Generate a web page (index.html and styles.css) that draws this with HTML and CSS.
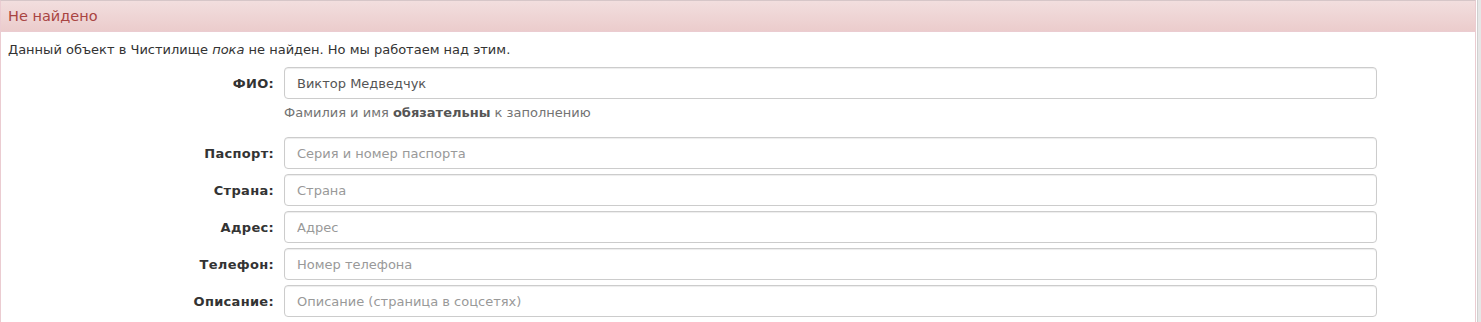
FILE: index.html
```html
<!DOCTYPE html>
<html lang="ru">
<head>
  <meta charset="UTF-8" />
  <title>Не найдено</title>
  <link rel="stylesheet" href="styles.css">
</head>
<body>
  <div class="panel">
    <div class="panel-heading">Не найдено</div>
    <div class="panel-body">
      <p class="intro">Данный объект в Чистилище <em>пока</em> не найден. Но мы работаем над этим.</p>

      <form class="form">
        <div class="row">
          <label for="fio">ФИО:</label>
          <input type="text" id="fio" value="Виктор Медведчук" />
        </div>
        <div class="row help-row">
          <span></span>
          <p class="help">Фамилия и имя <b>обязательны</b> к заполнению</p>
        </div>
        <div class="row">
          <label for="passport">Паспорт:</label>
          <input type="text" id="passport" placeholder="Серия и номер паспорта" />
        </div>
        <div class="row">
          <label for="country">Страна:</label>
          <input type="text" id="country" placeholder="Страна" />
        </div>
        <div class="row">
          <label for="address">Адрес:</label>
          <input type="text" id="address" placeholder="Адрес" />
        </div>
        <div class="row">
          <label for="phone">Телефон:</label>
          <input type="text" id="phone" placeholder="Номер телефона" />
        </div>
        <div class="row">
          <label for="desc">Описание:</label>
          <input type="text" id="desc" placeholder="Описание (страница в соцсетях)" />
        </div>
      </form>
    </div>
  </div>
  <div class="edge"></div>
</body>
</html>
```

FILE: styles.css
```css
body {
  margin: 0;
  font-family: "DejaVu Sans", Verdana, sans-serif;
  font-size: 13px;
  color: #333;
  background: #fff;
  display: flex;
  height: 322px;
  overflow: hidden;
}
.panel {
  width: 1477px;
  border: 1px solid #ebccd1;
  border-top-color: #d6c6c8;
  box-sizing: border-box;
  min-height: 340px;
}
.panel-heading {
  height: 30px;
  line-height: 30px;
  padding: 0 7px;
  font-size: 14.5px;
  color: #a94442;
  background: linear-gradient(#f2dede, #ebcccc);
  border-bottom: 1px solid #ebccd1;
}
.panel-body {
  padding: 9px 7px;
}
.intro {
  margin: 0 0 9px;
  line-height: 17px;
}
.row {
  display: grid;
  grid-template-columns: 266px 1093px;
  column-gap: 10px;
  align-items: center;
  margin-bottom: 5px;
}
.row label {
  text-align: right;
  font-weight: bold;
  font-size: 13px;
  letter-spacing: 0.3px;
}
.row input {
  height: 32px;
  box-sizing: border-box;
  padding: 6px 12px;
  font-family: inherit;
  font-size: 13px;
  color: #555;
  border: 1px solid #ccc;
  border-radius: 4px;
  box-shadow: inset 0 1px 1px rgba(0,0,0,0.075);
}
.row input::placeholder {
  color: #999;
}
.help-row {
  margin: 0;
}
.help {
  margin: 0 0 16px;
  color: #737373;
  line-height: 17px;
}
.help b {
  color: #555;
}
.edge {
  width: 3px;
  margin-left: 1px;
  background: #e6e6e6;
  border-left: 1px solid #d0d0d0;
}
```
